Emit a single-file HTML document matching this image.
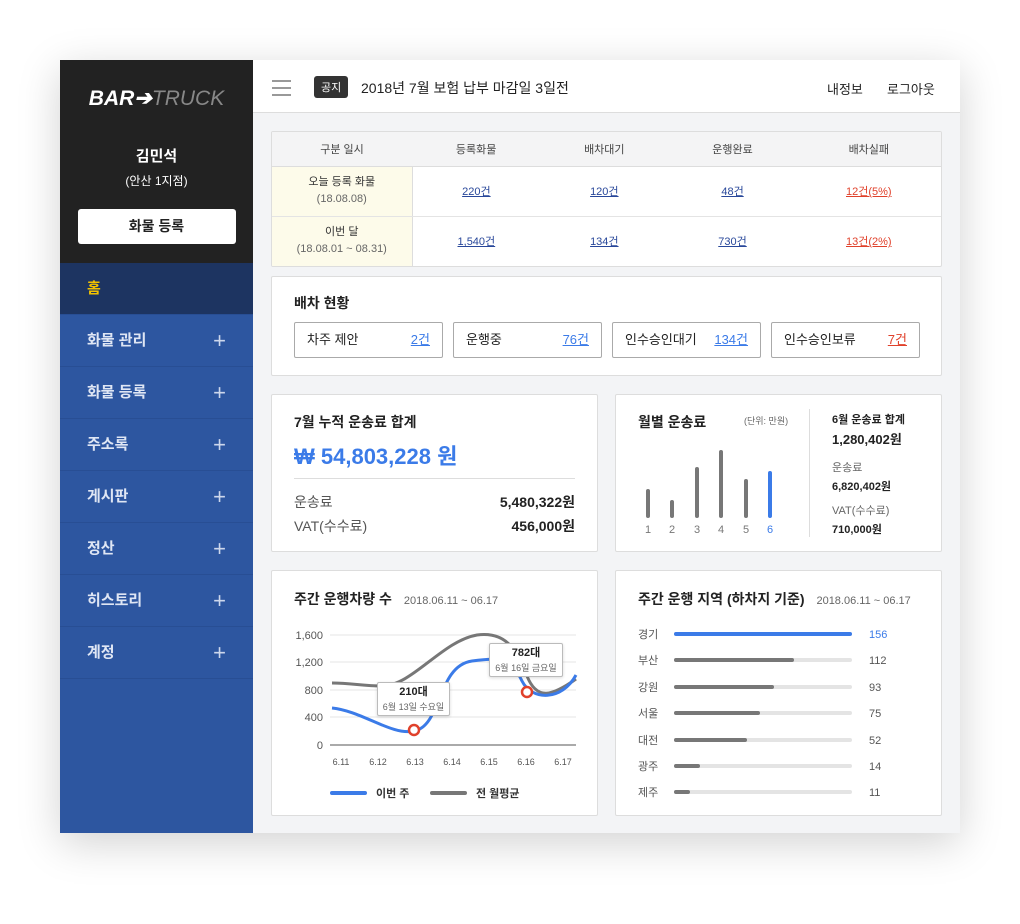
<!DOCTYPE html>
<html><head><meta charset="utf-8"><style>
*{box-sizing:border-box;margin:0;padding:0}
body{width:1020px;height:924px;background:#fff;font-family:"Liberation Sans","Noto Sans CJK KR",sans-serif;color:#222;position:relative;overflow:hidden}
.app{position:absolute;left:60px;top:60px;width:900px;height:773px;background:#f3f4f6;box-shadow:0 10px 40px rgba(0,0,0,.18);overflow:hidden}
.side{position:absolute;left:0;top:0;width:193px;height:773px;background:#2d56a0}
.top{height:203px;background:#222;text-align:center;color:#fff}
.logo{padding-top:26px;font-size:21px;font-weight:bold;font-style:italic;letter-spacing:0;height:60px}
.logo span{color:#888;font-weight:normal}
.name{margin-top:25px;font-size:15px;font-weight:bold}
.br{font-size:12px;margin-top:6px}
.btn{margin:20px auto 0;width:158px;height:35px;background:#fff;border-radius:3px;color:#222;font-size:14px;font-weight:bold;line-height:35px}
.nav div{height:52px;border-bottom:1px solid #284e94;color:#dfe6f4;font-size:15px;font-weight:bold;padding-left:27px;line-height:51px;position:relative}
.nav div b{position:absolute;right:27px;top:0;font-weight:normal;font-size:22px;color:#cdd7ec}
.nav .home{background:#1d3461;color:#f2c200}
.hdr{position:absolute;left:193px;top:0;right:0;height:53px;background:#fff;border-bottom:1px solid #ddd}
.ham{position:absolute;left:19px;top:20px;width:19px}
.ham i{display:block;height:2px;background:#999;margin-bottom:5px}
.tag{position:absolute;left:61px;top:16px;background:#333;color:#fff;font-size:11px;padding:3px 7px;border-radius:3px}
.ttl{position:absolute;left:108px;top:18px;font-size:14px}
.hr{position:absolute;top:19px;font-size:13px}
.box{position:absolute;background:#fff;border:1px solid #ddd;border-radius:2px}
table{border-collapse:collapse;width:100%;font-size:11px;text-align:center}
th{height:34px;background:#f4f4f5;font-weight:normal;color:#444;border-bottom:1px solid #ddd}
td{height:50px;border-bottom:1px solid #e4e4e4;color:#28479a}
td.f{background:#fdfbea;color:#333;line-height:17px;border-right:1px solid #ddd}
td.f span{color:#666}
td u,td a{text-decoration:underline}
.r{color:#e0412b}
h3{font-size:14px;font-weight:bold;color:#222}
.sm{font-size:11px;color:#666;font-weight:normal}
.chip{position:absolute;top:45px;width:149px;height:36px;border:1px solid #aaa;border-radius:2px;font-size:13px;line-height:34px;padding:0 12px}
.chip u{position:absolute;right:12px;color:#3b7be8}
</style></head><body>
<div class="app">
<div class="side">
 <div class="top">
  <div class="logo">BAR➔<span>TRUCK</span></div>
  <div class="name">김민석</div>
  <div class="br">(안산 1지점)</div>
  <div class="btn">화물 등록</div>
 </div>
 <div class="nav">
  <div class="home">홈</div>
  <div>화물 관리<b>+</b></div>
  <div>화물 등록<b>+</b></div>
  <div>주소록<b>+</b></div>
  <div>게시판<b>+</b></div>
  <div>정산<b>+</b></div>
  <div>히스토리<b>+</b></div>
  <div>계정<b>+</b></div>
 </div>
</div>
<div class="hdr">
 <div class="ham"><i></i><i></i><i></i></div>
 <div class="tag">공지</div>
 <div class="ttl">2018년 7월 보험 납부 마감일 3일전</div>
 <div class="hr" style="left:574px">내정보</div>
 <div class="hr" style="left:634px">로그아웃</div>
</div>

<div class="box" style="left:211px;top:71px;width:671px;height:136px;overflow:hidden">
<table>
<tr><th style="width:140px">구분 일시</th><th>등록화물</th><th>배차대기</th><th>운행완료</th><th>배차실패</th></tr>
<tr><td class="f">오늘 등록 화물<br><span>(18.08.08)</span></td><td><u>220건</u></td><td><u>120건</u></td><td><u>48건</u></td><td class="r"><u>12건(5%)</u></td></tr>
<tr><td class="f" style="border-bottom:none">이번 달<br><span>(18.08.01 ~ 08.31)</span></td><td style="border-bottom:none"><u>1,540건</u></td><td style="border-bottom:none"><u>134건</u></td><td style="border-bottom:none"><u>730건</u></td><td class="r" style="border-bottom:none"><u>13건(2%)</u></td></tr>
</table></div>

<div class="box" style="left:211px;top:216px;width:671px;height:100px">
 <h3 style="position:absolute;left:22px;top:16px">배차 현황</h3>
 <div class="chip" style="left:22px">차주 제안<u>2건</u></div>
 <div class="chip" style="left:181px">운행중<u>76건</u></div>
 <div class="chip" style="left:340px">인수승인대기<u>134건</u></div>
 <div class="chip" style="left:499px">인수승인보류<u style="color:#e0412b">7건</u></div>
</div>

<div class="box" style="left:211px;top:334px;width:327px;height:158px">
 <h3 style="position:absolute;left:22px;top:17px">7월 누적 운송료 합계</h3>
 <div style="position:absolute;left:22px;top:44px;font-size:22px;font-weight:bold;color:#3b7be8">₩ 54,803,228 원</div>
 <div style="position:absolute;left:22px;right:22px;top:83px;border-top:1px solid #ddd"></div>
 <div style="position:absolute;left:22px;top:97px;font-size:14px;color:#555">운송료</div>
 <div style="position:absolute;right:22px;top:97px;font-size:14px;font-weight:bold">5,480,322원</div>
 <div style="position:absolute;left:22px;top:121px;font-size:14px;color:#555">VAT(수수료)</div>
 <div style="position:absolute;right:22px;top:121px;font-size:14px;font-weight:bold">456,000원</div>
</div>

<div class="box" style="left:555px;top:334px;width:327px;height:158px">
 <h3 style="position:absolute;left:22px;top:17px">월별 운송료</h3>
 <div style="position:absolute;left:128px;top:19px;font-size:9px;color:#666">(단위: 만원)</div>
 <svg style="position:absolute;left:0;top:0" width="200" height="158">
  <g stroke="#777" stroke-width="4" stroke-linecap="round">
   <line x1="32" y1="96" x2="32" y2="121"/><line x1="56" y1="107" x2="56" y2="121"/><line x1="81" y1="74" x2="81" y2="121"/><line x1="105" y1="57" x2="105" y2="121"/><line x1="130" y1="86" x2="130" y2="121"/><line x1="154" y1="78" x2="154" y2="121" stroke="#3b7be8"/>
  </g>
  <g font-size="11" fill="#777" text-anchor="middle" font-family="Liberation Sans">
   <text x="32" y="138">1</text><text x="56" y="138">2</text><text x="81" y="138">3</text><text x="105" y="138">4</text><text x="130" y="138">5</text><text x="154" y="138" fill="#3b7be8">6</text>
  </g>
 </svg>
 <div style="position:absolute;left:193px;top:14px;bottom:14px;border-left:1px solid #ddd"></div>
 <div style="position:absolute;left:216px;top:15px;font-size:11px;font-weight:bold;line-height:20px">6월 운송료 합계<br><span style="font-size:13px">1,280,402원</span></div>
 <div style="position:absolute;left:216px;top:64px;font-size:11px;line-height:19px"><span style="color:#666">운송료</span><br><b>6,820,402원</b></div>
 <div style="position:absolute;left:216px;top:107px;font-size:11px;line-height:19px"><span style="color:#666">VAT(수수료)</span><br><b>710,000원</b></div>
</div>

<div class="box" style="left:211px;top:510px;width:327px;height:246px">
 <h3 style="position:absolute;left:22px;top:18px">주간 운행차량 수 <span class="sm" style="margin-left:8px">2018.06.11 ~ 06.17</span></h3>
 <svg style="position:absolute;left:0;top:0" width="327" height="246">
  <g stroke="#e5e5e5"><line x1="58" y1="64" x2="304" y2="64"/><line x1="58" y1="91" x2="304" y2="91"/><line x1="58" y1="119" x2="304" y2="119"/><line x1="58" y1="146" x2="304" y2="146"/></g>
  <line x1="58" y1="174" x2="304" y2="174" stroke="#555"/>
  <g font-size="11" fill="#555" text-anchor="end" font-family="Liberation Sans"><text x="51" y="68">1,600</text><text x="51" y="95">1,200</text><text x="51" y="123">800</text><text x="51" y="150">400</text><text x="51" y="178">0</text></g>
  <g font-size="9" fill="#555" text-anchor="middle" font-family="Liberation Sans"><text x="69" y="194">6.11</text><text x="106" y="194">6.12</text><text x="143" y="194">6.13</text><text x="180" y="194">6.14</text><text x="217" y="194">6.15</text><text x="254" y="194">6.16</text><text x="291" y="194">6.17</text></g>
  <path d="M60 112 C80 112 90 115 110 115 C140 115 170 70 205 64 C235 60 245 80 255 105 C265 130 280 125 304 108" fill="none" stroke="#777" stroke-width="3"/>
  <path d="M60 137 C90 140 120 165 142 160 C170 155 165 95 200 90 C235 85 240 90 250 110 C260 130 290 130 304 104" fill="none" stroke="#3b7be8" stroke-width="3"/>
  <circle cx="142" cy="159" r="5" fill="#fff" stroke="#e0412b" stroke-width="2.5"/>
  <circle cx="255" cy="121" r="5" fill="#fff" stroke="#e0412b" stroke-width="2.5"/>
  <line x1="60" y1="222" x2="93" y2="222" stroke="#3b7be8" stroke-width="4" stroke-linecap="round"/>
  <line x1="160" y1="222" x2="193" y2="222" stroke="#777" stroke-width="4" stroke-linecap="round"/>
  <g font-size="11" font-weight="bold" fill="#333"><text x="104" y="226">이번 주</text><text x="204" y="226">전 월평균</text></g>
 </svg>
 <div style="position:absolute;left:105px;top:111px;width:73px;height:34px;background:#fff;border:1px solid #bbb;border-radius:2px;text-align:center;font-size:11px;line-height:15px;padding-top:2px;box-shadow:0 1px 3px rgba(0,0,0,.15)"><b>210대</b><br><span style="font-size:9px;color:#666">6월 13일 수요일</span></div>
 <div style="position:absolute;left:217px;top:72px;width:74px;height:34px;background:#fff;border:1px solid #bbb;border-radius:2px;text-align:center;font-size:11px;line-height:15px;padding-top:2px;box-shadow:0 1px 3px rgba(0,0,0,.15)"><b>782대</b><br><span style="font-size:9px;color:#666">6월 16일 금요일</span></div>
</div>

<div class="box" style="left:555px;top:510px;width:327px;height:246px">
 <h3 style="position:absolute;left:22px;top:18px">주간 운행 지역 (하차지 기준) <span class="sm" style="margin-left:8px">2018.06.11 ~ 06.17</span></h3>
 <svg style="position:absolute;left:0;top:0" width="327" height="246">
  <g font-size="11" fill="#555">
   <text x="22" y="67">경기</text><text x="22" y="93">부산</text><text x="22" y="120">강원</text><text x="22" y="146">서울</text><text x="22" y="173">대전</text><text x="22" y="199">광주</text><text x="22" y="225">제주</text>
  </g>
  <g stroke="#e4e4e4" stroke-width="4" stroke-linecap="round">
   <line x1="60" y1="63" x2="234" y2="63"/><line x1="60" y1="89" x2="234" y2="89"/><line x1="60" y1="116" x2="234" y2="116"/><line x1="60" y1="142" x2="234" y2="142"/><line x1="60" y1="169" x2="234" y2="169"/><line x1="60" y1="195" x2="234" y2="195"/><line x1="60" y1="221" x2="234" y2="221"/>
  </g>
  <g stroke="#777" stroke-width="4" stroke-linecap="round">
   <line x1="60" y1="63" x2="234" y2="63" stroke="#3b7be8"/><line x1="60" y1="89" x2="176" y2="89"/><line x1="60" y1="116" x2="156" y2="116"/><line x1="60" y1="142" x2="142" y2="142"/><line x1="60" y1="169" x2="129" y2="169"/><line x1="60" y1="195" x2="82" y2="195"/><line x1="60" y1="221" x2="72" y2="221"/>
  </g>
  <g font-size="11" fill="#555" font-family="Liberation Sans">
   <text x="253" y="67" fill="#3b7be8">156</text><text x="253" y="93">112</text><text x="253" y="120">93</text><text x="253" y="146">75</text><text x="253" y="173">52</text><text x="253" y="199">14</text><text x="253" y="225">11</text>
  </g>
 </svg>
</div>
</div>
</body></html>
